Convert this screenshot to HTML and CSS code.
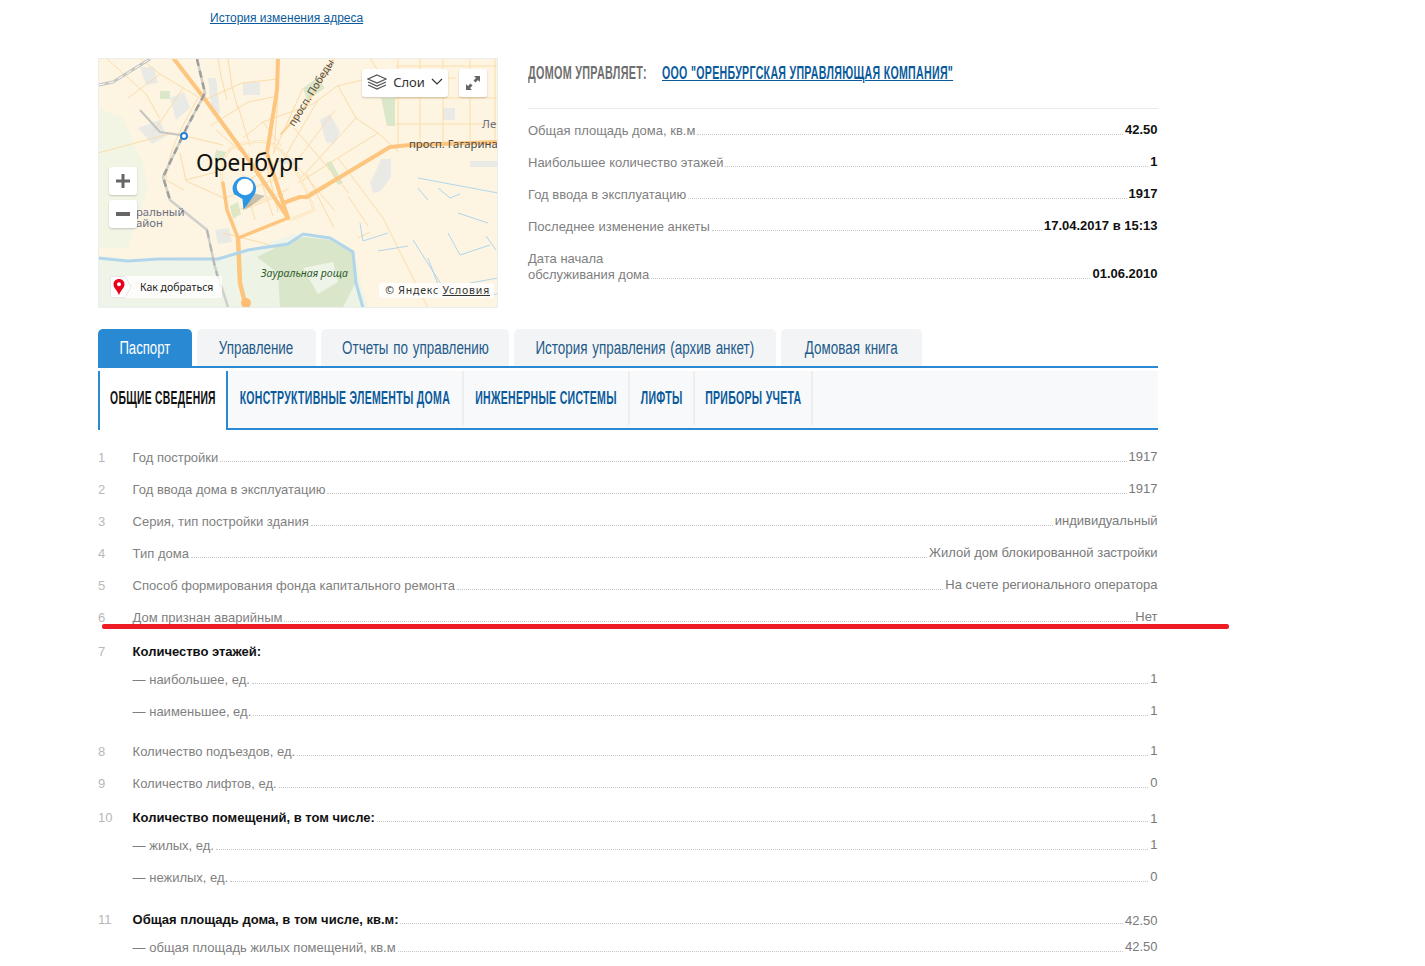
FILE: index.html
```html
<!DOCTYPE html>
<html lang="ru">
<head>
<meta charset="utf-8">
<title>Паспорт дома</title>
<link rel="stylesheet" href="styles.css">
</head>
<body>
<main class="page">
  <div class="history"><a href="#">История изменения адреса</a></div>
  <section class="top">
    <div class="map">
      <svg class="map-art" viewBox="0 0 400 250" width="400" height="250">
        <rect width="400" height="250" fill="#fdf5e1"/>
        <path d="M0 50L25 60 45 105 50 130 30 190 0 190Z" fill="#f3f5e4"/>
        <path d="M0 200L60 203 120 200 150 192 200 175 150 250H0Z" fill="#eef4e8"/>
        <path d="M205 176L232 180 256 194 262 225 270 250H140L145 200Z" fill="#edf3e5"/>
        <path d="M159 199L179 189 205 179 232 182 255 195 259 222 245 249H182L180 215Z" fill="#d9e6ca"/>
        <path d="M205 210l30-6 5 20-20 12z" fill="#eef4e8"/>
        <g fill="#e9e9e6">
          <path d="M222 62l10-6 10 18-6 12-8-2z"/><path d="M272 125l6-12 5-12h10v18l-10 14-8 2z"/>
          <rect x="372" y="103" width="28" height="6"/><rect x="145" y="24" width="17" height="13"/>
          <path d="M42 9h14l4 16-12 2z"/><path d="M110 20h8l4 35-8 2z"/><path d="M117 172l14-2 3 14-14 2z"/>
          <path d="M40 70l22-8 6 16-14 8z"/><path d="M72 40l14-6 6 16-14 12z"/><path d="M185 100h12v6h-12z"/><path d="M345 50h12v12h-12z"/>
        </g>
        <g fill="#dbe7c9"><rect x="62" y="33" width="10" height="8"/><path d="M205 30l14-10 8 10-18 12z"/><path d="M283 40h14v28h-8z"/><path d="M132 148l8-4 3 12-8 5z"/><path d="M118 92l10 2-2 10-10-2z"/><path d="M228 105l5-2 12 22-5 2z"/></g>
        <g fill="none" stroke="#fbdcaa" stroke-width="1">
          <path d="M120 0l3 18 6 24M130 1l4 28 6 22M30 40L62 16l40 24M55 75L85 30M0 95l75-20 50 12M82 95l6 28 40 18M8 0l40 36 14 25M62 16L42 0"/>
          <path d="M88 122l30-8 24-12M145 80l20-16 50-18 24-18 34-8M112 68l38-24 30-6M100 45l44-20 36-4"/>
          <path d="M205 30l-18 40-12 26M220 42l-35 60M237 52l-45 60M258 60l-55 60M280 75l-80 50M292 90l-90 50M175 85l30 30 32 38M196 70l30 35 25 30M165 64l18 24M240 28l18 32 22 15 20 18"/>
          <path d="M298 8h102M298 40h102M298 66h102M300 0v90M322 0v88M345 0v86M372 0v84M397 0v84M308 20h50M272 0l26 42"/>
          <path d="M240 100l45 60 30 60 15 30M208 115l28 55M150 150l36-14M125 175l40 10 14 5M260 180l12-6"/>
          <path d="M145 117l12 45M158 108l17 50M168 104l12 50M127 140l60-22M133 155l58-24M135 132l55-34M150 95l34 55M180 38l-4 56M140 48l12 40M118 72l30 26"/>
          <path d="M100 40c-14 26-30 50-32 82l18 10M342 16h-24M250 138l20 30"/>
        </g>
        <path d="M125 130c-5-25 2-40 18-44 12-3 28-5 38 5l10 10c6 12 14 22 22 42l3 9-24 10" fill="none" stroke="#fce2b2" stroke-width="2.500"/>
        <path d="M125 130c-5-25 2-40 18-44 12-3 28-5 38 5l10 10c6 12 14 22 22 42l3 9-24 10" fill="none" stroke="#fff6e6" stroke-width="1"/>
        <g fill="none" stroke="#fdc57e" stroke-linejoin="round" stroke-linecap="round">
          <path d="M76 1l30 39 40 55 44 65" stroke-width="4"/>
          <path d="M180 1l-1 31-10 63 16 50 5 15" stroke-width="4"/>
          <path d="M190 160l-50 20-11-28-4-27" stroke-width="3.500"/>
          <path d="M140 180l2 45 6 24" stroke-width="4.500"/>
          <path d="M185 145l17-6h7l83-50 20-2 88-3" stroke-width="4"/>
          <path d="M183 76l22-24 30-50" stroke-width="2" stroke="#fcd393"/>
        </g>
        <circle cx="148" cy="245" r="5" fill="#fdbd74"/>
        <g fill="none" stroke="#b1d6ec">
          <path d="M0 200l30 3 30-2 60 0 30-9 40-6 15-10 27 4 23 14 3 31 7 25" stroke-width="3"/>
          <path d="M262 165l3 18 25-8M280 193l30-5M315 182l35 55M330 200l15 40M350 175l12 22 30-10M372 225l28-5M320 130l10 12M340 130l12 10 10-4M320 120l80 15M360 155l30 10M388 178l10 14M388 240l12-5" stroke-width="1"/>
        </g>
        <g fill="none" stroke-linejoin="round">
          <path d="M99 1l8 34-18 34-24 50 7 23 37 30 8 37 13 40" stroke="#cfcfcc" stroke-width="2.500"/>
          <path d="M99 1l8 34-18 34-24 50 7 23" stroke="#9f9f9d" stroke-width="2.500" stroke-dasharray="7 5"/>
          <path d="M109 172l8 37 5 20" stroke="#b4b4b2" stroke-width="2" stroke-dasharray="8 6"/>
          <path d="M42 52l20 22 20 3" stroke="#c4c4c2" stroke-width="2"/>
          <path d="M1 27l14-3 37-23" stroke="#c4c4c2" stroke-width="3"/>
          <path d="M1 27l14-3 37-23" stroke="#fff" stroke-width="1" stroke-dasharray="6 4"/>
        </g>
        <circle cx="86" cy="78" r="3" fill="#fff" stroke="#2a7fd4" stroke-width="2"/>
        <text class="map-road" transform="translate(196 69) rotate(-58)">просп. Победы</text>
        <text class="map-road" x="311" y="90">просп. Гагарина</text>
        <text class="map-road map-dist" x="384" y="70">Ле</text>
        <text class="map-road map-dist" x="38" y="158">ральный</text>
        <text class="map-road map-dist" x="38" y="169">айон</text>
        <text class="map-grove" x="163" y="219">Зауральная роща</text>
        <text class="map-city" x="98" y="113">Оренбург</text>
        <path d="M151 134l16 4-20 14z" fill="#8a8270" opacity=".45"/>
        <path d="M136 136a11.700 11.700 0 1 1 20 1l-10.500 15-1-11z" fill="#2b95e6"/>
        <circle cx="147" cy="129" r="8.300" fill="#fff"/>
      </svg>
      <div class="layers"><svg class="layers-icon" viewBox="0 0 20 16" width="20" height="16"><path d="M10 1l9 4-9 4-9-4zM1 8l9 4 9-4M1 11l9 4 9-4" fill="none" stroke="#555" stroke-width="1.300"/></svg><span>Слои</span><svg class="chev" viewBox="0 0 12 8" width="12" height="8"><path d="M1 1l5 5 5-5" fill="none" stroke="#333" stroke-width="1.200"/></svg></div>
      <div class="expand"><svg viewBox="0 0 16 16" width="16" height="16"><path d="M9 1h6v6l-2-2-2.500 2.500-2-2L11 3zM7 15H1V9l2 2 2.500-2.500 2 2L5 13z" fill="#666"/></svg></div>
      <div class="zoom zoom-in"><svg viewBox="0 0 14 14" width="14" height="14"><path d="M5.500 0h3v5.500H14v3H8.500V14h-3V8.500H0v-3h5.500z" fill="#666"/></svg></div>
      <div class="zoom zoom-out"><svg viewBox="0 0 14 14" width="14" height="14"><rect y="5" width="14" height="4" fill="#666"/></svg></div>
      <div class="route"><svg class="route-pin" viewBox="0 0 22 22" width="22" height="22"><path d="M2 .5H15L21 11 15 21.500H2A1.500 1.500 0 0 1 .5 20V2A1.500 1.500 0 0 1 2 .5z" fill="#fff" stroke="#e6e6e6"/><path d="M9 3C5.800 3 3.500 5.300 3.500 8.300c0 3.800 3.500 5.500 5.500 11 2-5.500 5.500-7.200 5.500-11C14.500 5.300 12.200 3 9 3z" fill="#e8001c"/><circle cx="9" cy="8.300" r="2" fill="#fff"/></svg><span class="route-text">Как добраться</span></div>
      <div class="copyright"><span>© Яндекс</span> <a href="#">Условия</a></div>
    </div>
    <div class="summary">
      <h2 class="managed"><span class="mg-label"><span class="squeeze">Домом управляет:</span></span><a class="mg-link" href="#"><span class="squeeze">ООО "Оренбургская управляющая компания"</span></a></h2>
      <div class="facts">
        <div class="fact"><span>Общая площадь дома, кв.м</span><i></i><b>42.50</b></div>
        <div class="fact"><span>Наибольшее количество этажей</span><i></i><b>1</b></div>
        <div class="fact"><span>Год ввода в эксплуатацию</span><i></i><b>1917</b></div>
        <div class="fact"><span>Последнее изменение анкеты</span><i></i><b>17.04.2017 в 15:13</b></div>
        <div class="fact fact-tall"><span>Дата начала<br>обслуживания дома</span><i></i><b>01.06.2010</b></div>
      </div>
    </div>
  </section>
  <nav class="tabs">
    <a class="tab tab-active" href="#"><span class="squeeze">Паспорт</span></a>
    <a class="tab" href="#"><span class="squeeze">Управление</span></a>
    <a class="tab" href="#"><span class="squeeze">Отчеты по управлению</span></a>
    <a class="tab" href="#"><span class="squeeze">История управления (архив анкет)</span></a>
    <a class="tab" href="#"><span class="squeeze">Домовая книга</span></a>
  </nav>
  <nav class="subtabs">
    <a class="subtab subtab-active" href="#"><span class="squeeze">Общие сведения</span></a>
    <a class="subtab" href="#"><span class="squeeze">Конструктивные элементы дома</span></a>
    <a class="subtab" href="#"><span class="squeeze">Инженерные системы</span></a>
    <a class="subtab" href="#"><span class="squeeze">Лифты</span></a>
    <a class="subtab" href="#"><span class="squeeze">Приборы учета</span></a>
  </nav>
  <section class="list">
    <div class="row"><em>1</em><span>Год постройки</span><i></i><b>1917</b></div>
    <div class="row"><em>2</em><span>Год ввода дома в эксплуатацию</span><i></i><b>1917</b></div>
    <div class="row"><em>3</em><span>Серия, тип постройки здания</span><i></i><b>индивидуальный</b></div>
    <div class="row"><em>4</em><span>Тип дома</span><i></i><b>Жилой дом блокированной застройки</b></div>
    <div class="row"><em>5</em><span>Способ формирования фонда капитального ремонта</span><i></i><b>На счете регионального оператора</b></div>
    <div class="row"><em>6</em><span>Дом признан аварийным</span><i></i><b>Нет</b></div>
    <div class="row row-head row-gap"><em>7</em><strong>Количество этажей:</strong></div>
    <div class="row row-sub"><em></em><span>— наибольшее, ед.</span><i></i><b>1</b></div>
    <div class="row"><em></em><span>— наименьшее, ед.</span><i></i><b>1</b></div>
    <div class="row row-after"><em>8</em><span>Количество подъездов, ед.</span><i></i><b>1</b></div>
    <div class="row"><em>9</em><span>Количество лифтов, ед.</span><i></i><b>0</b></div>
    <div class="row row-head row-gap"><em>10</em><strong>Количество помещений, в том числе:</strong><i></i><b>1</b></div>
    <div class="row row-sub"><em></em><span>— жилых, ед.</span><i></i><b>1</b></div>
    <div class="row"><em></em><span>— нежилых, ед.</span><i></i><b>0</b></div>
    <div class="row row-head row-big"><em>11</em><strong>Общая площадь дома, в том числе, кв.м:</strong><i></i><b>42.50</b></div>
    <div class="row row-sub"><em></em><span>— общая площадь жилых помещений, кв.м</span><i></i><b>42.50</b></div>
  </section>
  <div class="redline"></div>
</main>
</body>
</html>
```
FILE: styles.css
```css
* { box-sizing: border-box; }
html, body { margin: 0; padding: 0; background: #fff; overflow: hidden; height: 966px; }
body { font-family: "Liberation Sans", Arial, sans-serif; font-size: 13px; color: #7f7f7f; }
.page { position: relative; width: 1425px; padding: 0 0 0 98px; }
a { color: #0b5b9c; }
.history { height: 58px; padding: 11px 0 0 112px; font-size: 12px; line-height: 14px; }
.top { display: flex; width: 1060px; height: 271px; }
.map { position: relative; width: 400px; height: 250px; flex: none; outline: 1px solid #eceeee; outline-offset: -1px; overflow: hidden; }
.map-art { display: block; }
.map-road { font: 11.300px "Noto Sans", "DejaVu Sans", sans-serif; fill: #4c4c4c; }
.map-road[transform] { font-size: 10.500px; }
.map-dist { fill: #6c6f80; }
.map-grove { font: italic 10.500px "Noto Sans", sans-serif; fill: #2d5c2b; }
.map-city { font: 23px "Noto Sans", "DejaVu Sans", sans-serif; fill: #111; }
.layers, .expand, .zoom { position: absolute; background: #fff; border-radius: 3px; box-shadow: 0 1px 2px rgba(0,0,0,.2); display: flex; align-items: center; justify-content: center; }
.layers { left: 264px; top: 11px; width: 86px; height: 28px; gap: 6px; padding-bottom: 2px; font: 13px/24px "Noto Sans", sans-serif; color: #333; }
.expand { left: 361px; top: 11px; width: 28px; height: 28px; }
.zoom { left: 11px; width: 28px; height: 28px; }
.zoom-in { top: 109px; }
.zoom-out { top: 142px; }
.route { position: absolute; left: 12px; top: 218px; width: 112px; height: 22px; display: flex; align-items: center; background: rgba(255,255,255,.8); border-radius: 3px; font: 10.500px "Noto Sans", sans-serif; color: #222; }
.route-pin { flex: none; }
.route-text { padding-left: 8px; }
.copyright { position: absolute; right: 4px; top: 225px; height: 15px; padding: 0 4px 0 6px; background: rgba(255,255,255,.8); border-radius: 2px; font: 10.500px/15px "Noto Sans", sans-serif; letter-spacing: .8px; color: #333; white-space: nowrap; }
.copyright a { color: #333; }
.summary { margin-left: 30px; width: 630px; }
.squeeze { display: inline-block; white-space: nowrap; }
.managed { margin: 0; height: 51px; border-bottom: 1px solid #eaeaea; display: grid; grid-template-columns: 134px 290px; align-items: start; font: bold 18px/30px "Liberation Sans", sans-serif; text-transform: uppercase; letter-spacing: .5px; color: #6f6f6f; }
.mg-label, .mg-link { display: flex; width: 100%; height: 30px; }
.mg-label .squeeze { transform: scaleX(.6); transform-origin: 0 50%; }
.mg-link .squeeze { transform: scaleX(.59); transform-origin: 0 50%; }
.mg-link { color: #0b5b9c; }
.facts { margin-top: -3px; }
.fact, .row { display: flex; align-items: flex-end; height: 32px; }
.fact span, .row span { line-height: 16px; }
.fact i, .row i { flex: 1; border-bottom: 1px dotted #c6c6c6; margin: 0 2px 3px 2px; min-width: 0; }
.row i { margin-bottom: 4px; }
.fact span { position: relative; top: 1px; }
.fact b { color: #111; font-size: 13px; line-height: 16px; font-weight: 700; margin-right: .5px; }
.fact-tall { height: 48px; }
.tabs { display: grid; grid-template-columns: 94px 119px 188px 262px 141px; column-gap: 5px; width: 1060px; height: 39px; border-bottom: 2px solid #2a89d3; }
.tab { display: flex; align-items: center; justify-content: center; height: 37px; background: #f3f4f6; border-radius: 5px 5px 0 0; font: 18px/24px "Liberation Sans", sans-serif; word-spacing: 1.500px; color: #1e5b8a; text-decoration: none; }
.tab .squeeze { transform: scaleX(.745); }
.tab-active { background: #2a89d3; color: #fff; }
.tab-active .squeeze { transform: scaleX(.73); }
.subtabs { display: grid; grid-template-columns: 130px 236px 166px 65px 118px; width: 1060px; height: 59px; margin-top: 3px; background: #f8f9fa; border-bottom: 2px solid #2a89d3; }
.subtab { display: flex; align-items: center; justify-content: center; height: 54px; border-right: 2px solid #eee; font: bold 18px/24px "Liberation Sans", sans-serif; letter-spacing: .5px; color: #0b5b9c; text-transform: uppercase; text-decoration: none; }
.subtab .squeeze { transform: scaleX(.585); }
.subtab-active { height: 59px; color: #111; background: #fff; border-left: 2px solid #2a89d3; border-right: 2px solid #2a89d3; padding-bottom: 5px; }
.subtab-active .squeeze { transform: scaleX(.575); }
.list { width: 1060px; padding-top: 4px; }
.row em { width: 34.600px; flex: none; align-self: flex-end; font-style: normal; color: #b8b8b8; line-height: 16px; }
.row b { font-weight: 400; font-size: 13px; line-height: 16px; position: relative; top: -1px; color: #7a7a7a; margin-right: .5px; }
.row-head b { top: 1px; }
.row strong { color: #111; font-weight: 700; line-height: 16px; }
.row-gap { height: 34px; }
.row-sub { height: 28px; }
.row-after { height: 40px; }
.row-big { height: 42px; }
.redline { position: absolute; left: 102px; top: 624px; width: 1127px; height: 5px; background: #ed1c24; border-radius: 2px; }
```
